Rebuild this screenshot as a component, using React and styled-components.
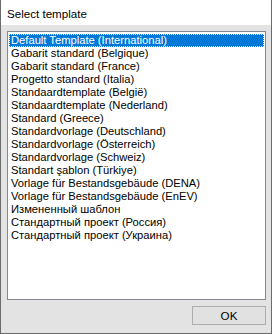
import React from 'react';
import styled, { createGlobalStyle } from 'styled-components';

const GlobalStyle = createGlobalStyle`
  html, body {
    margin: 0;
    padding: 0;
    background: #ffffff;
  }
`

const Window = styled.div`
  box-sizing: border-box;
  width: 272px;
  height: 334px;
  display: flex;
  flex-direction: column;
  border: 1px solid #6b6b6b;
  border-top: none;
  background: #e3e3e3;
  font-family: "Liberation Sans", Arial, sans-serif;
  font-size: 11.2px;
  color: #000;
`

const TitleBar = styled.div`
  height: 25px;
  flex-shrink: 0;
  background: #ffffff;
  display: flex;
  align-items: center;
  padding-left: 6px;
  padding-top: 1px;
  box-sizing: border-box;
  font-size: 11.6px;
`

const Body = styled.div`
  flex: 1;
  display: flex;
  flex-direction: column;
  padding: 6px 5px 7px 6px;
`

const ListBox = styled.div`
  box-sizing: border-box;
  height: 269px;
  background: #ffffff;
  border: 1px solid #828790;
  padding: 2px 1px;
`

const Row = styled.div`
  box-sizing: border-box;
  height: 13px;
  line-height: 13px;
  padding-left: 2px;
  white-space: nowrap;
  background: ${p => (p.$selected ? '#0078d7' : 'transparent')};
  color: ${p => (p.$selected ? '#ffffff' : '#000000')};
  outline: ${p => (p.$selected ? '1px dotted #ffffff' : 'none')};
  outline-offset: -1px;
`

const Footer = styled.div`
  display: flex;
  justify-content: flex-end;
  padding-top: 6px;
`

const Button = styled.button`
  box-sizing: border-box;
  width: 74px;
  height: 19px;
  background: #e1e1e1;
  border: 1px solid #adadad;
  font-family: inherit;
  font-size: 11.6px;
  color: #000;
  padding: 0;
`

const templates = [
  'Default Template (International)',
  'Gabarit standard (Belgique)',
  'Gabarit standard (France)',
  'Progetto standard (Italia)',
  'Standaardtemplate (België)',
  'Standaardtemplate (Nederland)',
  'Standard (Greece)',
  'Standardvorlage (Deutschland)',
  'Standardvorlage (Österreich)',
  'Standardvorlage (Schweiz)',
  'Standart şablon (Türkiye)',
  'Vorlage für Bestandsgebäude (DENA)',
  'Vorlage für Bestandsgebäude (EnEV)',
  'Измененный шаблон',
  'Стандартный проект (Россия)',
  'Стандартный проект (Украина)',
]

const App = () => {
  return (
    <>
      <GlobalStyle />
      <Window>
        <TitleBar>Select template</TitleBar>
        <Body>
          <ListBox>
            {templates.map((t, idx) => (
              <Row key={t} $selected={idx === 0}>{t}</Row>
            ))}
          </ListBox>
          <Footer>
            <Button>OK</Button>
          </Footer>
        </Body>
      </Window>
    </>
  )
}

export default App;
